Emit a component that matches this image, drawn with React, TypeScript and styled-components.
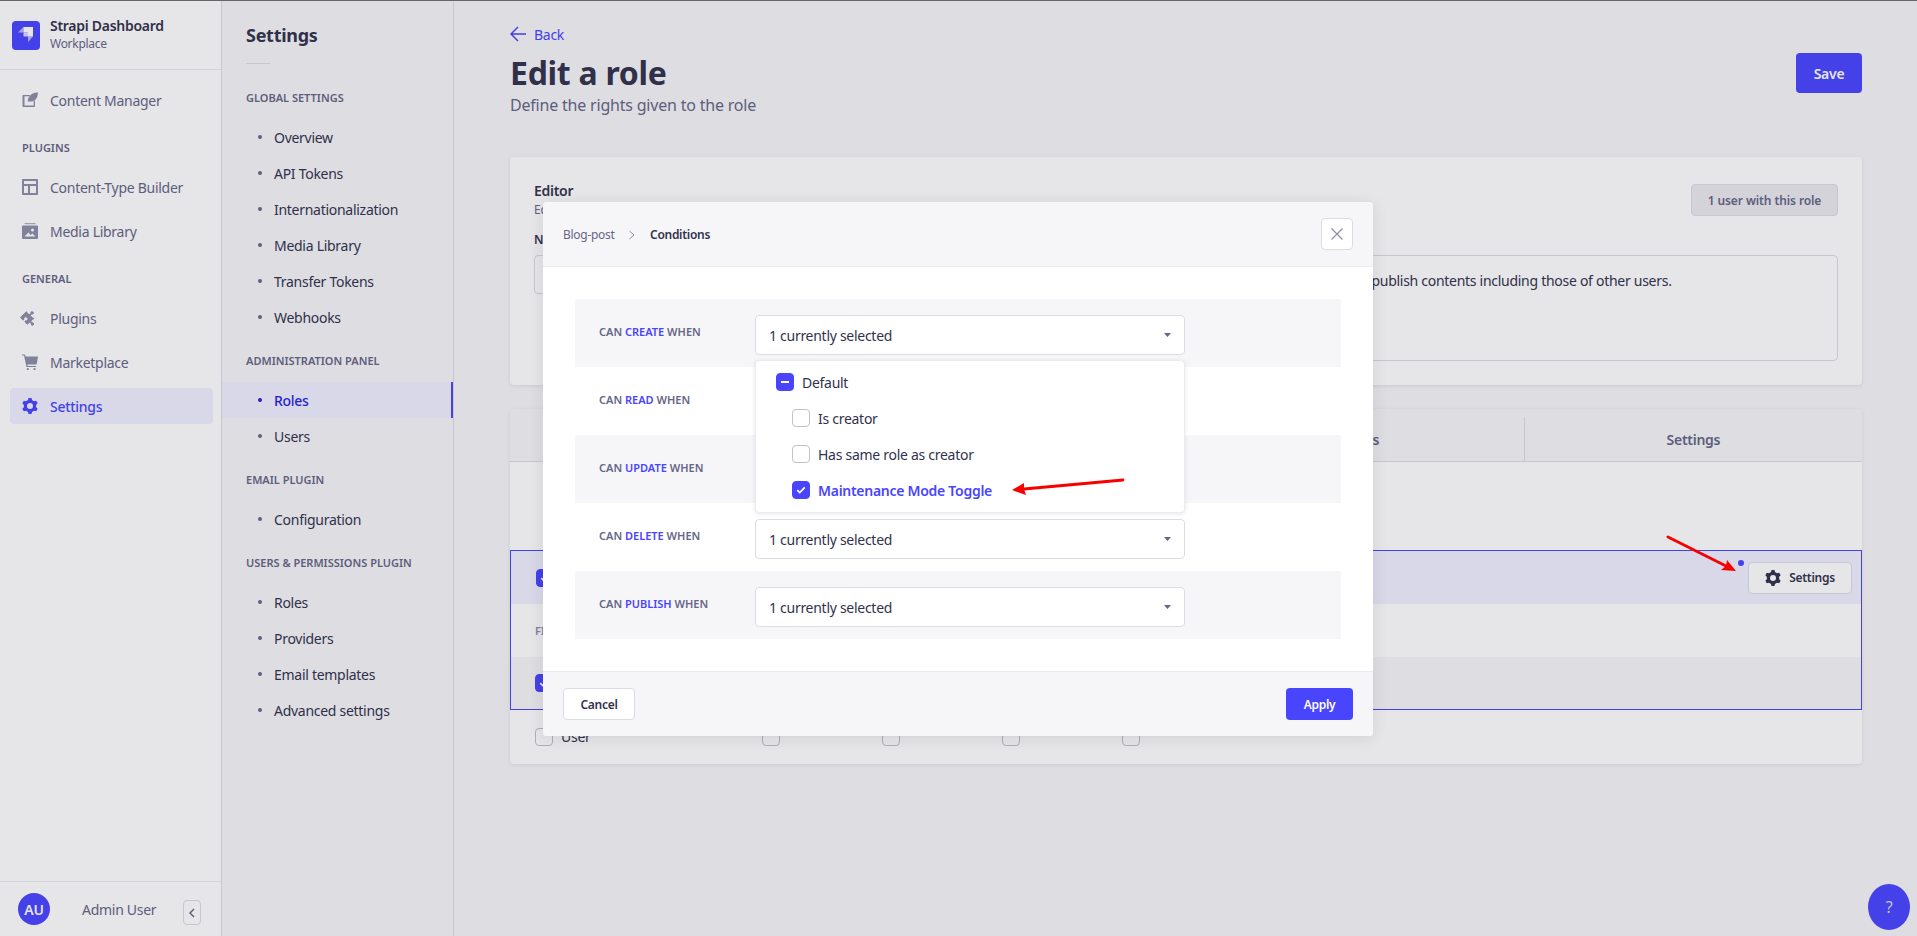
import React from 'react';
import styled, { createGlobalStyle } from 'styled-components';
import { FaPuzzlePiece } from 'react-icons/fa';

const GlobalStyle = createGlobalStyle`
    html, body {
        margin: 0;
        padding: 0;
        height: 100%;
        overflow: hidden;
    }
    body {
        font-family: "Noto Sans", "Open Sans", sans-serif;
        letter-spacing: -0.28px;
        color: #32324d;
        background: #f6f6f9;
    }
    * {
        box-sizing: border-box;
    }
`;

const primary = '#4945ff';

function Check({ size = 10 }: { size?: number }) {
    return (
        <svg width={size} height={size} viewBox="0 0 12 10" fill="none">
            <path d="M1.5 5.2 4.5 8.2 10.5 1.8" stroke="#fff" strokeWidth="2" />
        </svg>
    );
}

function Caret() {
    return (
        <svg width="7" height="4" viewBox="0 0 14 8">
            <path d="M0 0h14L7 8z" fill="#666687" />
        </svg>
    );
}

function Gear({ size = 16, color }: { size?: number; color: string }) {
    return (
        <svg width={size} height={size} viewBox="0 0 16 16" fill={color}>
            <path
                fillRule="evenodd"
                d="M8 1.800a6.200 6.200 0 1 1 0 12.400A6.200 6.200 0 0 1 8 1.800zm0 3.200a3 3 0 1 0 0 6 3 3 0 0 0 0-6z"
            />
            {[0, 60, 120, 180, 240, 300].map(a => (
                <path key={a} d="M5.800 3 6.500 0h3l.7 3z" transform={`rotate(${a} 8 8)`} />
            ))}
        </svg>
    );
}

function WriteIcon() {
    return (
        <svg width="16" height="16" viewBox="0 0 16 16" fill="#8e8ea9">
            <path d="M1.200 3h7.300L7.200 4.300H2.500v9.200h9.200V9.600L13 8.300v5.900c0 .4-.3.8-.8.8H1.200c-.4 0-.7-.4-.7-.8V3.800c0-.4.3-.8.700-.8z" />
            <path d="M15.800.3c.3 3.700-.9 8.200-5.800 9.200H5.700c.2-4.200 3-8.600 10.100-9.200z" />
        </svg>
    );
}

function LayoutIcon() {
    return (
        <svg width="16" height="16" viewBox="0 0 16 16" fill="#8e8ea9">
            <path
                fillRule="evenodd"
                d="M1 0h14c.6 0 1 .4 1 1v14c0 .6-.4 1-1 1H1c-.6 0-1-.4-1-1V1c0-.6.4-1 1-1zm1 2v3h12V2H2zm0 5v7h4V7H2zm6 0v7h6V7H8z"
            />
        </svg>
    );
}

function MediaIcon() {
    return (
        <svg width="16" height="16" viewBox="0 0 16 16" fill="#8e8ea9">
            <rect x="2.500" y="0" width="11" height="1.200" opacity=".7" />
            <path
                fillRule="evenodd"
                d="M1 2.500h14c.5 0 1 .4 1 1V15c0 .6-.5 1-1 1H1c-.5 0-1-.4-1-1V3.500c0-.6.5-1 1-1zM10.500 5.500a1.500 1.500 0 1 0 0 3 1.500 1.500 0 0 0 0-3zM2.500 13.500h11l-3-3-2 1.500-2-2.500z"
            />
        </svg>
    );
}

function CartIcon() {
    return (
        <svg width="16" height="16" viewBox="0 0 16 16" fill="#8e8ea9">
            <path d="M0 .5h2.800L3.600 2.500H16l-1.200 7.300c-.1.400-.4.700-.8.700H5.500L5.700 12H14v1H4.500L2 1.500H0z" />
            <circle cx="5.800" cy="15" r="1.100" />
            <circle cx="12.500" cy="15" r="1.100" />
        </svg>
    );
}

function RedArrow({
    from,
    tip,
    barbA,
    barbB,
    notch,
}: {
    from: number[];
    tip: number[];
    barbA: number[];
    barbB: number[];
    notch: number[];
}) {
    return (
        <g>
            <line
                x1={from[0]}
                y1={from[1]}
                x2={notch[0]}
                y2={notch[1]}
                stroke="#f70000"
                strokeWidth="2.800"
                strokeLinecap="round"
            />
            <polygon points={[tip, barbA, notch, barbB].map(p => p.join(',')).join(' ')} fill="#f70000" />
        </g>
    );
}

const conditions = ['create', 'read', 'update', 'delete', 'publish'];
const columns = ['Create', 'Read', 'Update', 'Delete', 'Publish'];
const userCells = columns.slice(0, 4);

export default function App() {
    return (
        <>
            <GlobalStyle />
            <Page>
                <MainNav>
                    <Brand>
                        <LogoBox>
                            <svg width="16" height="16" viewBox="0 0 16 16">
                                <path d="M5.500 0H15v9.500h-5v-4H5.500z" fill="#fff" />
                                <path d="M5.500 0v5.500H0z" fill="#fff" opacity=".6" />
                                <path d="M10 9.500h5L10 15z" fill="#fff" opacity=".6" />
                                <path d="M5.500 5.500H10v4H5.500z" fill="#fff" opacity=".8" />
                            </svg>
                        </LogoBox>
                        <div>
                            <BrandName>Strapi Dashboard</BrandName>
                            <BrandSub>Workplace</BrandSub>
                        </div>
                    </Brand>
                    <NavBody>
                        <NavItem>
                            <WriteIcon />
                            Content Manager
                        </NavItem>
                        <NavHeading>Plugins</NavHeading>
                        <NavItem>
                            <LayoutIcon />
                            Content-Type Builder
                        </NavItem>
                        <NavItem>
                            <MediaIcon />
                            Media Library
                        </NavItem>
                        <NavHeading>General</NavHeading>
                        <NavItem>
                            <PuzzleIcon size={16} color="#8e8ea9" />
                            Plugins
                        </NavItem>
                        <NavItem>
                            <CartIcon />
                            Marketplace
                        </NavItem>
                        <NavItem $active>
                            <Gear color={primary} />
                            Settings
                        </NavItem>
                    </NavBody>
                    <UserBar>
                        <Avatar>AU</Avatar>
                        <UserName>Admin User</UserName>
                        <CollapseButton>
                            <svg width="6" height="10" viewBox="0 0 6 10" fill="none">
                                <path d="M5 1 1 5l4 4" stroke="#666687" strokeWidth="1.500" />
                            </svg>
                        </CollapseButton>
                    </UserBar>
                </MainNav>

                <SubNav>
                    <SubNavTitle>Settings</SubNavTitle>
                    <SubNavRule />
                    <SubHeading $first>Global Settings</SubHeading>
                    <SubItem>Overview</SubItem>
                    <SubItem>API Tokens</SubItem>
                    <SubItem>Internationalization</SubItem>
                    <SubItem>Media Library</SubItem>
                    <SubItem>Transfer Tokens</SubItem>
                    <SubItem>Webhooks</SubItem>
                    <SubHeading>Administration Panel</SubHeading>
                    <SubItem $active>Roles</SubItem>
                    <SubItem>Users</SubItem>
                    <SubHeading>Email Plugin</SubHeading>
                    <SubItem>Configuration</SubItem>
                    <SubHeading>Users &amp; Permissions Plugin</SubHeading>
                    <SubItem>Roles</SubItem>
                    <SubItem>Providers</SubItem>
                    <SubItem>Email templates</SubItem>
                    <SubItem>Advanced settings</SubItem>
                </SubNav>

                <Main>
                    <BackLink>
                        <svg width="16" height="16" viewBox="0 0 16 16" fill="none">
                            <path d="M8 1 1 8l7 7M1 8h15" stroke={primary} strokeWidth="1.500" />
                        </svg>
                        Back
                    </BackLink>
                    <TitleRow>
                        <div>
                            <PageTitle>Edit a role</PageTitle>
                            <PageSub>Define the rights given to the role</PageSub>
                        </div>
                        <SaveButton>Save</SaveButton>
                    </TitleRow>

                    <RoleCard>
                        <RoleHead>
                            <div>
                                <RoleName>Editor</RoleName>
                                <RoleDesc>Editors can manage and publish contents</RoleDesc>
                            </div>
                            <UserBadge>1 user with this role</UserBadge>
                        </RoleHead>
                        <RoleFields>
                            <Field>
                                <FieldLabel>Name</FieldLabel>
                                <NameInput>Editor</NameInput>
                            </Field>
                            <Field>
                                <FieldLabel>Description</FieldLabel>
                                <DescInput>
                                    Editors can manage and publish contents including those of other users.
                                </DescInput>
                            </Field>
                        </RoleFields>
                    </RoleCard>

                    <PermCard>
                        <Tabs>
                            <Tab $first>Collection Types</Tab>
                            <Tab>Single Types</Tab>
                            <Tab>Plugins</Tab>
                            <Tab>Settings</Tab>
                        </Tabs>
                        <ColumnHead>
                            <NameCell />
                            {columns.map(c => (
                                <ColumnLabel key={c}>{c}</ColumnLabel>
                            ))}
                        </ColumnHead>
                        <OpenGroup>
                            <PermRow $tone="active">
                                <Box $on $nudge={1}>
                                    <Check />
                                </Box>
                                <RowName>Blog-post</RowName>
                                <SettingsButton>
                                    <ChangedDot />
                                    <Gear size={16} color="#32324d" />
                                    Settings
                                </SettingsButton>
                            </PermRow>
                            <PermRow>
                                <FieldHeading>Field-level permissions</FieldHeading>
                            </PermRow>
                            <PermRow $tone="shade">
                                <Box $on>
                                    <Check />
                                </Box>
                                <RowName>Title</RowName>
                            </PermRow>
                        </OpenGroup>
                        <PermRow>
                            <NameCell>
                                <Box $nudge={1} />
                                <RowName>User</RowName>
                            </NameCell>
                            {userCells.map(c => (
                                <CheckCell key={c}>
                                    <Box />
                                </CheckCell>
                            ))}
                        </PermRow>
                    </PermCard>
                </Main>

                <HelpButton>?</HelpButton>

                <Overlay>
                    <Modal>
                        <ModalHead>
                            <Crumb>Blog-post</Crumb>
                            <CrumbChevron width="8" height="10" viewBox="0 0 8 10" fill="none">
                                <path d="M1.500 1 6 5l-4.500 4" stroke="#8e8ea9" strokeWidth="1" />
                            </CrumbChevron>
                            <CrumbCurrent>Conditions</CrumbCurrent>
                            <CloseButton>
                                <svg width="12" height="12" viewBox="0 0 12 12" fill="none">
                                    <path d="M.5.5l11 11M11.500.5l-11 11" stroke="#8e8ea9" strokeWidth="1.200" />
                                </svg>
                            </CloseButton>
                        </ModalHead>
                        <ModalBody>
                            {conditions.map((c, i) => (
                                <ConditionRow key={c} $shade={i % 2 === 0}>
                                    <ConditionLabel>
                                        can <b>{c}</b> when
                                    </ConditionLabel>
                                    <SelectWrap>
                                        <Select>
                                            1 currently selected
                                            <Caret />
                                        </Select>
                                        {i === 0 && (
                                            <Dropdown>
                                                <Option>
                                                    <Box $on>
                                                        <MinusMark />
                                                    </Box>
                                                    Default
                                                </Option>
                                                <Option $child>
                                                    <Box />
                                                    Is creator
                                                </Option>
                                                <Option $child>
                                                    <Box />
                                                    Has same role as creator
                                                </Option>
                                                <Option $child $selected>
                                                    <Box $on>
                                                        <Check />
                                                    </Box>
                                                    Maintenance Mode Toggle
                                                </Option>
                                            </Dropdown>
                                        )}
                                    </SelectWrap>
                                </ConditionRow>
                            ))}
                        </ModalBody>
                        <ModalFoot>
                            <CancelButton>Cancel</CancelButton>
                            <ApplyButton>Apply</ApplyButton>
                        </ModalFoot>
                    </Modal>
                </Overlay>

                <Annotations width="1917" height="936">
                    <RedArrow
                        from={[1123, 480]}
                        tip={[1012, 490]}
                        barbA={[1024, 483]}
                        barbB={[1026, 495]}
                        notch={[1024, 489]}
                    />
                    <RedArrow
                        from={[1668, 537]}
                        tip={[1736, 571]}
                        barbA={[1727, 560]}
                        barbB={[1721, 570]}
                        notch={[1726, 566]}
                    />
                </Annotations>
            </Page>
        </>
    );
}

const Page = styled.div`
    position: relative;
    display: flex;
    width: 1917px;
    height: 936px;
    overflow: hidden;
    border-top: 1px solid #666;
    background: #f6f6f9;
`;

const MainNav = styled.nav`
    display: flex;
    flex-direction: column;
    flex: 0 0 222px;
    background: #fff;
    border-right: 1px solid #dcdce4;
`;

const Brand = styled.div`
    display: flex;
    align-items: center;
    gap: 10px;
    height: 69px;
    padding: 0 12px;
    border-bottom: 1px solid #eaeaef;
`;

const LogoBox = styled.div`
    display: flex;
    align-items: center;
    justify-content: center;
    width: 28px;
    height: 29px;
    border-radius: 4px;
    background: ${primary};
`;

const BrandName = styled.div`
    font-size: 14px;
    font-weight: 600;
    line-height: 18px;
`;

const BrandSub = styled.div`
    font-size: 12px;
    line-height: 18px;
    color: #666687;
`;

const NavBody = styled.div`
    flex: 1;
    padding: 12px 8px 0 10px;
`;

const NavItem = styled.div<{ $active?: boolean }>`
    display: flex;
    align-items: center;
    gap: 12px;
    height: 36px;
    margin-bottom: 8px;
    padding: 0 12px;
    border-radius: 4px;
    font-size: 14px;
    color: ${p => (p.$active ? primary : '#666687')};
    background: ${p => (p.$active ? '#f0f0ff' : 'transparent')};
    font-weight: ${p => (p.$active ? 500 : 400)};
`;

const PuzzleIcon = styled(FaPuzzlePiece)`
    flex: none;
    transform: rotate(45deg) scale(0.95);
`;

const NavHeading = styled.div`
    height: 20px;
    margin: 20px 0 11px;
    padding-left: 12px;
    font-size: 11px;
    font-weight: 600;
    line-height: 20px;
    letter-spacing: 0;
    text-transform: uppercase;
    color: #666687;
`;

const UserBar = styled.div`
    position: relative;
    display: flex;
    align-items: center;
    height: 55px;
    padding-left: 18px;
    border-top: 1px solid #eaeaef;
`;

const Avatar = styled.div`
    display: flex;
    align-items: center;
    justify-content: center;
    width: 32px;
    height: 32px;
    border-radius: 50%;
    background: ${primary};
    color: #fff;
    font-size: 14px;
    font-weight: 600;
`;

const UserName = styled.div`
    margin-left: 32px;
    font-size: 14px;
    color: #666687;
`;

const CollapseButton = styled.div`
    position: absolute;
    left: 183px;
    top: 18px;
    display: flex;
    align-items: center;
    justify-content: center;
    width: 18px;
    height: 25px;
    border: 1px solid #dcdce4;
    border-radius: 4px;
`;

const SubNav = styled.aside`
    flex: 0 0 232px;
    padding-top: 22px;
    background: #f6f6f9;
    border-right: 1px solid #dcdce4;
`;

const SubNavTitle = styled.div`
    height: 24px;
    padding-left: 24px;
    font-size: 18px;
    font-weight: 700;
    line-height: 24px;
`;

const SubNavRule = styled.div`
    width: 24px;
    height: 1px;
    margin: 16px 0 0 24px;
    background: #dcdce4;
`;

const SubHeading = styled.div<{ $first?: boolean }>`
    height: 20px;
    margin: ${p => (p.$first ? 24 : 16)}px 0 11px;
    padding-left: 24px;
    font-size: 11px;
    font-weight: 600;
    line-height: 20px;
    letter-spacing: 0;
    text-transform: uppercase;
    color: #666687;
`;

const SubItem = styled.div<{ $active?: boolean }>`
    position: relative;
    display: flex;
    align-items: center;
    height: 36px;
    padding-left: 52px;
    font-size: 14px;
    color: ${p => (p.$active ? '#271fe0' : '#32324d')};
    background: ${p => (p.$active ? '#f0f0ff' : 'transparent')};
    border-right: ${p => (p.$active ? `2px solid ${primary}` : '0')};
    font-weight: ${p => (p.$active ? 500 : 400)};
    &::before {
        content: '';
        position: absolute;
        left: 36px;
        top: 16px;
        width: 4px;
        height: 4px;
        border-radius: 50%;
        background: ${p => (p.$active ? '#271fe0' : '#666687')};
    }
`;

const Main = styled.main`
    flex: 1;
    min-width: 0;
    padding: 23px 55px 0 56px;
`;

const BackLink = styled.div`
    display: flex;
    align-items: center;
    gap: 8px;
    height: 20px;
    font-size: 14px;
    color: ${primary};
`;

const TitleRow = styled.div`
    display: flex;
    align-items: flex-start;
    justify-content: space-between;
    padding-top: 9px;
    height: 113px;
`;

const PageTitle = styled.h1`
    margin: 0;
    font-size: 32px;
    font-weight: 700;
    line-height: 40px;
`;

const PageSub = styled.p`
    margin: 0;
    font-size: 16px;
    line-height: 24px;
    letter-spacing: -0.2px;
    color: #666687;
`;

const SaveButton = styled.div`
    display: flex;
    align-items: center;
    justify-content: center;
    width: 66px;
    height: 40px;
    border-radius: 4px;
    background: ${primary};
    color: #fff;
    font-size: 14px;
    font-weight: 600;
`;

const RoleCard = styled.section`
    height: 228px;
    padding: 24px;
    border-radius: 4px;
    background: #fff;
    box-shadow: 0 1px 4px rgba(33, 33, 52, 0.1);
`;

const RoleHead = styled.div`
    display: flex;
    align-items: flex-start;
    justify-content: space-between;
    height: 50px;
`;

const RoleName = styled.div`
    font-size: 14px;
    font-weight: 600;
    line-height: 20px;
`;

const RoleDesc = styled.div`
    font-size: 12px;
    line-height: 18px;
    color: #666687;
`;

const UserBadge = styled.div`
    display: flex;
    align-items: center;
    justify-content: center;
    width: 147px;
    height: 32px;
    margin-top: 3px;
    border: 1px solid #dcdce4;
    border-radius: 4px;
    background: #eaeaef;
    font-size: 12px;
    font-weight: 600;
    letter-spacing: -0.1px;
    color: #666687;
`;

const RoleFields = styled.div`
    display: grid;
    grid-template-columns: 1fr 1fr;
    gap: 24px;
`;

const Field = styled.div`
    position: relative;
`;

const FieldLabel = styled.div`
    height: 24px;
    font-size: 12px;
    font-weight: 600;
    line-height: 18px;
`;

const NameInput = styled.div`
    height: 39px;
    padding: 9px 16px;
    border: 1px solid #dcdce4;
    border-radius: 4px;
    font-size: 14px;
`;

const DescInput = styled.div`
    height: 106px;
    padding: 16px;
    border: 1px solid #dcdce4;
    border-radius: 4px;
    font-size: 14px;
    line-height: 18px;
    color: #32324d;
`;

const PermCard = styled.section`
    height: 355px;
    margin-top: 24px;
    border-radius: 4px;
    background: #fff;
    box-shadow: 0 1px 4px rgba(33, 33, 52, 0.1);
`;

const Tabs = styled.div`
    display: flex;
    height: 53px;
    background: #f6f6f9;
    border-bottom: 1px solid #dcdce4;
    border-radius: 4px 4px 0 0;
`;

const Tab = styled.div<{ $first?: boolean }>`
    flex: 1;
    display: flex;
    align-items: center;
    justify-content: center;
    margin-top: 8px;
    font-size: 14px;
    font-weight: 600;
    color: #666687;
    border-left: ${p => (p.$first ? '0' : '1px solid #dcdce4')};
`;

const ColumnHead = styled.div`
    display: flex;
    align-items: center;
    height: 88px;
    padding-left: 24px;
`;

const NameCell = styled.div`
    display: flex;
    align-items: center;
    flex: 0 0 228px;
`;

const ColumnLabel = styled.div`
    flex: 0 0 120px;
    font-size: 14px;
    font-weight: 600;
    color: #666687;
`;

const OpenGroup = styled.div`
    height: 160px;
    border: 1px solid ${primary};
    & > div:last-child {
        height: 52px;
    }
`;

const PermRow = styled.div<{ $tone?: 'active' | 'shade' }>`
    display: flex;
    align-items: center;
    height: 53px;
    padding: 0 9px 0 24px;
    font-size: 14px;
    background: ${p => (p.$tone === 'active' ? '#f0f0ff' : p.$tone === 'shade' ? '#f6f6f9' : 'transparent')};
`;

const CheckCell = styled.div`
    flex: 0 0 120px;
`;

const Box = styled.div<{ $on?: boolean; $nudge?: number }>`
    flex: none;
    display: flex;
    align-items: center;
    justify-content: center;
    width: 18px;
    height: 18px;
    margin-left: ${p => p.$nudge ?? 0}px;
    border-radius: 4px;
    border: 1px solid ${p => (p.$on ? primary : '#c0c0cf')};
    background: ${p => (p.$on ? primary : '#fff')};
`;

const MinusMark = styled.span`
    display: block;
    width: 8px;
    height: 2px;
    background: #fff;
`;

const RowName = styled.div`
    margin-left: 8px;
    font-size: 14px;
`;

const FieldHeading = styled.div`
    font-size: 11px;
    font-weight: 600;
    text-transform: uppercase;
    color: #8e8ea9;
`;

const SettingsButton = styled.div`
    position: relative;
    display: flex;
    align-items: center;
    justify-content: center;
    gap: 8px;
    width: 104px;
    height: 32px;
    margin-left: auto;
    border: 1px solid #dcdce4;
    border-radius: 4px;
    background: #fff;
    font-size: 12px;
    font-weight: 600;
`;

const ChangedDot = styled.span`
    position: absolute;
    left: -11px;
    top: -3px;
    width: 6px;
    height: 6px;
    border-radius: 50%;
    background: ${primary};
`;

const HelpButton = styled.div`
    position: absolute;
    right: 7px;
    bottom: 6px;
    display: flex;
    align-items: center;
    justify-content: center;
    width: 42px;
    height: 46px;
    border-radius: 50%;
    background: ${primary};
    color: #dcdce4;
    font-size: 16px;
`;

const Overlay = styled.div`
    position: absolute;
    inset: 0;
    display: flex;
    justify-content: center;
    padding: 201px 1px 0 0;
    background: rgba(33, 33, 52, 0.115);
`;

const Modal = styled.div`
    display: flex;
    flex-direction: column;
    width: 830px;
    height: 534px;
    border-radius: 4px;
    background: #fff;
    box-shadow: 0 2px 15px rgba(33, 33, 52, 0.1);
`;

const ModalHead = styled.div`
    display: flex;
    align-items: center;
    height: 65px;
    padding: 0 20px;
    border-bottom: 1px solid #eaeaef;
    border-radius: 4px 4px 0 0;
    background: #f6f6f9;
`;

const Crumb = styled.span`
    flex: 0 0 54px;
    font-size: 12px;
    color: #666687;
`;

const CrumbChevron = styled.svg`
    margin: 2px 14px 0 11px;
`;

const CrumbCurrent = styled.span`
    font-size: 12px;
    font-weight: 600;
`;

const CloseButton = styled.div`
    display: flex;
    align-items: center;
    justify-content: center;
    width: 32px;
    height: 32px;
    margin-left: auto;
    border: 1px solid #dcdce4;
    border-radius: 4px;
    background: #fff;
`;

const ModalBody = styled.div`
    flex: 1;
    padding: 32px 32px 0;
`;

const ConditionRow = styled.div<{ $shade: boolean }>`
    display: flex;
    height: 68px;
    padding: 16px 156px 0 24px;
    background: ${p => (p.$shade ? '#f6f6f9' : 'transparent')};
`;

const ConditionLabel = styled.div`
    flex: 0 0 156px;
    padding-top: 8px;
    font-size: 11px;
    font-weight: 600;
    line-height: 18px;
    letter-spacing: 0;
    text-transform: uppercase;
    color: #666687;
    & b {
        font-weight: 600;
        color: ${primary};
    }
`;

const SelectWrap = styled.div`
    position: relative;
    flex: 1;
`;

const Select = styled.div`
    display: flex;
    align-items: center;
    justify-content: space-between;
    height: 40px;
    padding: 0 13px;
    border: 1px solid #dcdce4;
    border-radius: 4px;
    background: #fff;
    font-size: 14px;
`;

const Dropdown = styled.div`
    position: absolute;
    top: 45px;
    left: 0;
    right: 0;
    z-index: 2;
    height: 153px;
    padding-top: 3px;
    border-radius: 4px;
    border: 1px solid #eaeaef;
    background: #fff;
    box-shadow: 0 1px 4px rgba(33, 33, 52, 0.1);
`;

const Option = styled.div<{ $child?: boolean; $selected?: boolean }>`
    display: flex;
    align-items: center;
    gap: 8px;
    height: 36px;
    padding-left: ${p => (p.$child ? 36 : 20)}px;
    font-size: 14px;
    color: ${p => (p.$selected ? primary : '#32324d')};
    font-weight: ${p => (p.$selected ? 600 : 400)};
`;

const ModalFoot = styled.div`
    display: flex;
    align-items: center;
    justify-content: space-between;
    height: 65px;
    padding: 0 20px;
    border-top: 1px solid #eaeaef;
    border-radius: 0 0 4px 4px;
    background: #f6f6f9;
`;

const CancelButton = styled.div`
    display: flex;
    align-items: center;
    justify-content: center;
    width: 72px;
    height: 32px;
    border: 1px solid #dcdce4;
    border-radius: 4px;
    background: #fff;
    font-size: 12px;
    font-weight: 600;
`;

const ApplyButton = styled.div`
    display: flex;
    align-items: center;
    justify-content: center;
    width: 67px;
    height: 32px;
    border-radius: 4px;
    background: ${primary};
    color: #fff;
    font-size: 12px;
    font-weight: 600;
`;

const Annotations = styled.svg`
    position: absolute;
    top: -1px;
    left: 0;
    z-index: 3;
    pointer-events: none;
`;
